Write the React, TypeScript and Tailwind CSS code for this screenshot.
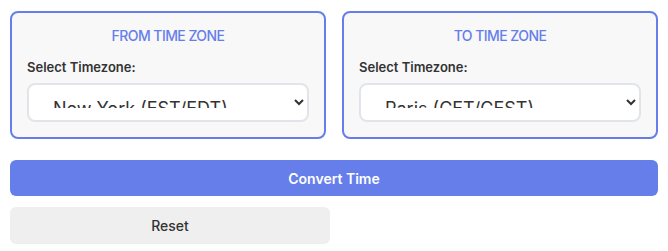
import React, { useState } from "react";

const zones = [
  { value: "America/New_York", label: "New York (EST/EDT)" },
  { value: "America/Los_Angeles", label: "Los Angeles (PST/PDT)" },
  { value: "Europe/London", label: "London (GMT/BST)" },
  { value: "Europe/Paris", label: "Paris (CET/CEST)" },
  { value: "Asia/Tokyo", label: "Tokyo (JST)" },
];

function ZoneCard({
  title,
  value,
  onChange,
}: {
  title: string;
  value: string;
  onChange: (v: string) => void;
}) {
  return (
    <div className="rounded-lg border-2 border-[#667eea] bg-[#f8f8f8] p-[15px]">
      <h3 className="text-center text-[14px] leading-4 font-medium tracking-[-0.04em] text-[#667eea] uppercase">
        {title}
      </h3>
      <label className="mt-[14px] block text-[13px] leading-[18px] font-semibold text-[#333]">
        Select Timezone:
      </label>
      <select
        value={value}
        onChange={(e) => onChange(e.target.value)}
        className="mt-[7px] block h-[39px] w-full rounded-lg border-2 border-[#e1e5e9] bg-white px-5 py-3 text-[18px] text-[#333]"
      >
        {zones.map((z) => (
          <option key={z.value} value={z.value}>
            {z.label}
          </option>
        ))}
      </select>
    </div>
  );
}

export default function App() {
  const [from, setFrom] = useState("America/New_York");
  const [to, setTo] = useState("Europe/Paris");

  return (
    <div className="bg-white px-[10px] pt-[11px] font-['Inter',sans-serif]">
      <div className="grid grid-cols-2 gap-4">
        <ZoneCard title="From Time Zone" value={from} onChange={setFrom} />
        <ZoneCard title="To Time Zone" value={to} onChange={setTo} />
      </div>

      <button className="mt-[21px] block h-[36px] w-full rounded-md bg-[#667eea] text-[14px] font-semibold text-white">
        Convert Time
      </button>

      {/* 重置 */}
      <button
        onClick={() => {
          setFrom("America/New_York");
          setTo("Europe/Paris");
        }}
        className="mt-[11px] block h-[37px] w-[320px] rounded-md bg-[#efefef] text-[14px] font-medium text-[#333]"
      >
        Reset
      </button>
    </div>
  );
}
